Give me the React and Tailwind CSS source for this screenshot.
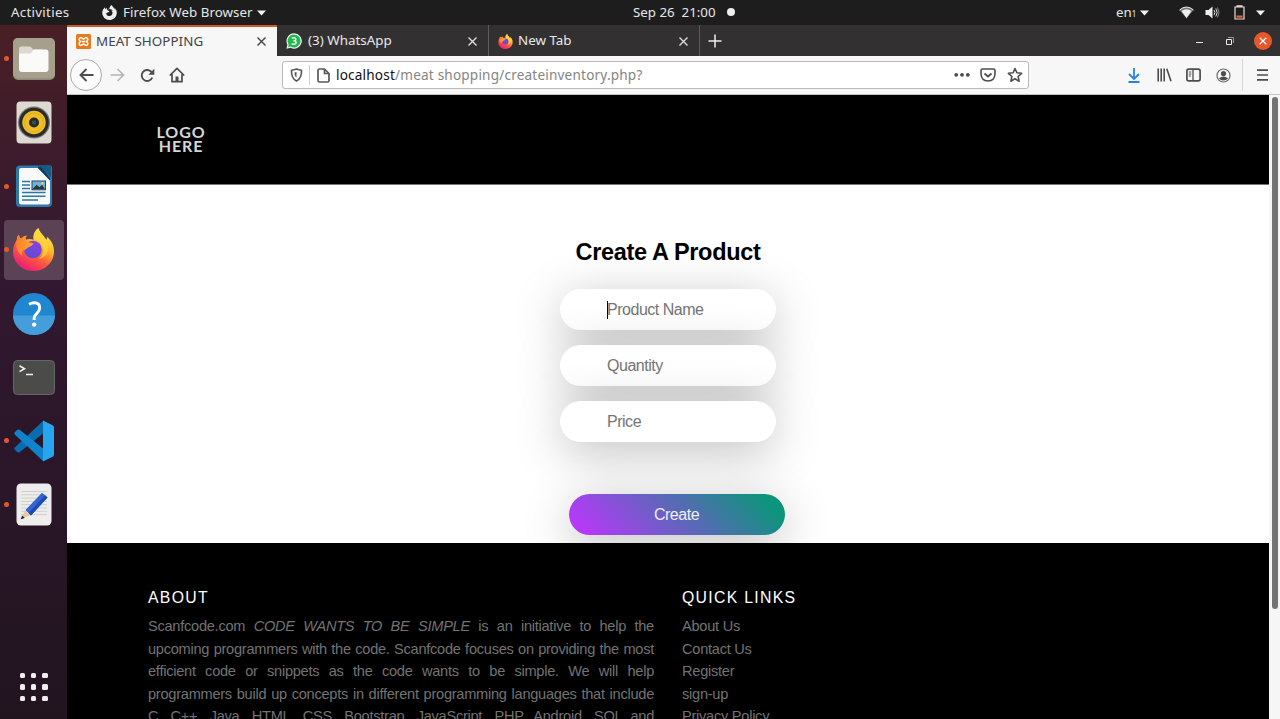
import React from "react";
import { SiFirefoxbrowser } from "react-icons/si";

const UI = "font-['Noto_Sans',sans-serif]";

function Caret() {
  return <svg width="9" height="6" viewBox="0 0 9 6"><path d="M0 0.5h9L4.5 5.5z" fill="#f2f2f2" /></svg>;
}

function FirefoxLogo({ size, id }) {
  return (
    <svg width={size} height={size} viewBox="0 0 44 44">
      <defs>
        <linearGradient id={id + "a"} x1="0.8" y1="0.05" x2="0.25" y2="1">
          <stop offset="0" stopColor="#fff14a" />
          <stop offset="0.35" stopColor="#ffb52b" />
          <stop offset="0.6" stopColor="#ff5f3a" />
          <stop offset="0.9" stopColor="#f0256d" />
        </linearGradient>
        <linearGradient id={id + "b"} x1="0.7" y1="0" x2="0.3" y2="1">
          <stop offset="0" stopColor="#8b3fe8" />
          <stop offset="1" stopColor="#5a4fd0" />
        </linearGradient>
        <linearGradient id={id + "c"} x1="0" y1="0" x2="1" y2="0.5">
          <stop offset="0" stopColor="#ff7a2a" />
          <stop offset="1" stopColor="#ffa62e" />
        </linearGradient>
      </defs>
      <path d="M27 0c1 4 4 6 6 9 1 1 1.500 2 2 3 1-1 1-2 1-3 4 4 7 8 7 15 0 11-9 20-21 20S1 35 1 24c0-5 2-9 4-12 0-2 .5-3.500 2-5 .5 2 1 3 2 4 2-2 4-3 6-3-1 1-1 3-1 4 3-1 5-1 8 0-1-4 1-9 5-12z" fill={"url(#" + id + "a)"} />
      <circle cx="21.500" cy="22" r="9" fill={"url(#" + id + "b)"} />
      <path d="M5 12c0-2 .5-3.500 2-5 .5 2 1 3 2 4 1.500-1.500 4-3 6-3-1 2-1.300 3.500-.5 5.500 2 1 5 1.500 7.500 2-1 2.500-3.500 3.300-5.500 4.500-2 1.200-2 2-4 2.500-2 .6-3 3-1.500 6C6 26 3 19 5 12z" fill={"url(#" + id + "c)"} />
      <path d="M27 0c-4 3-6 7-4 12 6 1 10 6 9 12-.5 3-2 6-5 8 9-2 12-10 8-18-3-5-7-8-8-14z" fill="#ffd83a" opacity="0.75" />
    </svg>
  );
}

function FilesIcon() {
  return (
    <svg width="42" height="42" viewBox="0 0 42 42">
      <rect x="0" y="0" width="42" height="42" rx="5" fill="#8f8877" />
      <rect x="0" y="0" width="42" height="40.500" rx="5" fill="#a69f8c" />
      <path d="M6 11q0-2.500 2.500-2.500h8q1.500 0 2.500 1.500l1 1.500h9v6H6z" fill="#dcd9d2" />
      <path d="M6 15.500h10.500q1.500 0 2.500-1.500l1-1.500q.7-1 2-1h11q2.500 0 2.500 2.500v17q0 3-3 3H9q-3 0-3-3z" fill="#fafaf8" />
    </svg>
  );
}

function MusicIcon() {
  return (
    <svg width="36" height="43" viewBox="0 0 36 43">
      <rect x="0.500" y="0.500" width="35" height="42" rx="4" fill="#dedad2" />
      <circle cx="18" cy="21.500" r="16" fill="#777" />
      <circle cx="18" cy="21.500" r="14.800" fill="#292b2b" />
      <circle cx="18" cy="21.500" r="11.700" fill="#f0bd27" />
      <circle cx="18" cy="21.500" r="9.500" fill="none" stroke="#e0af20" strokeWidth="1" />
      <circle cx="18" cy="21.500" r="5" fill="#262a2c" />
      <circle cx="18" cy="21.500" r="2.200" fill="#444a4c" />
    </svg>
  );
}

function WriterIcon() {
  return (
    <svg width="36" height="43" viewBox="0 0 36 43">
      <path d="M4 .5h20l11 0q1 1 1 3V38q0 4-4 4H4q-4 0-4-4V4.500q0-4 4-4z" fill="#2c7aa9" />
      <path d="M23 .5h12v12z" fill="#155b82" />
      <path d="M3 5q0-2 2-2h17l12 12.500V37q0 2.500-2.500 2.500h-26Q3 39.500 3 37z" fill="#f9f9f9" />
      <path d="M22 3l12 12.500V13L25 1.500h-3z" fill="#0f3f60" />
      <path d="M6 16.500h8M6 20h8M6 23.500h8M6 27.500h23.500M6 31.200h23.500M6 35h16" stroke="#2877a6" strokeWidth="1.500" />
      <rect x="16" y="16" width="13.500" height="8.800" fill="#6cb4dc" stroke="#174968" strokeWidth="1" />
      <path d="M16.500 24.300l4-4.500 3 2.500 2.500-2.500 3 4.500z" fill="#38322c" />
      <circle cx="26.500" cy="18.300" r="1.300" fill="#f5c244" />
    </svg>
  );
}

function HelpIcon() {
  return (
    <svg width="42" height="42" viewBox="0 0 42 42">
      <circle cx="21" cy="21" r="21" fill="#2186d0" />
      <path d="M0 22.500h42a21 19.500 0 0 1-42 0z" fill="#459edc" />
      <path d="M16 11.200q3-1.500 5.500-1.400 5.200.3 5.200 5 0 3-2.800 5.500-2.700 2.300-2.700 4.700v2" fill="none" stroke="#fff" strokeWidth="2.900" />
      <circle cx="21.200" cy="31.600" r="2.200" fill="#fff" />
    </svg>
  );
}

function TerminalIcon() {
  return (
    <svg width="42" height="35" viewBox="0 0 42 35">
      <rect x="0.500" y="0.500" width="41" height="34" rx="4" fill="#4b4c4a" stroke="#666765" />
      <path d="M6.500 5.800l5 2.900-5 2.900M13 14.500h7" fill="none" stroke="#f0f0f0" strokeWidth="1.600" />
    </svg>
  );
}

function CodeIcon() {
  return (
    <svg width="42" height="42" viewBox="0 0 42 42">
      <path d="M30 1L1.800 27.500q-1 1 0 2.300l2.500 2.400q1.200.8 2.300 0L32 12z" fill="#0a6cae" />
      <path d="M30 41L1.800 14.500q-1-1.200 0-2.300l2.500-2.400q1.200-.8 2.300 0L32 30z" fill="#0f83cb" />
      <path d="M30 .6l10 4.800q1 .6 1 2v27.200q0 1.400-1 2L30 41.400z" fill="#27a5ee" />
    </svg>
  );
}

function EditorIcon() {
  return (
    <svg width="36" height="43" viewBox="0 0 36 43">
      <rect x="0.500" y="0.500" width="35" height="42" rx="4.500" fill="#ededeb" />
      <path d="M5 8.500h26M5 11.800h26M5 15.100h26M5 18.400h26M5 21.700h26M5 25h26M5 28.300h26M5 31.600h26" stroke="#cccccc" strokeWidth="0.900" />
      <path d="M5 36l3.800-8.500 5 5z" fill="#eac79c" />
      <path d="M4.700 36.300l1.500-3.700 2.500 2.300z" fill="#222" />
      <path d="M9.500 27L26 9.800l5.500 4.700L15 32.500z" fill="#3464d4" />
      <path d="M12.500 30L29 12.300l2.500 2.200L15 32.500z" fill="#1e4bae" />
    </svg>
  );
}

const dockItems = [
  { Icon: FilesIcon, open: true },
  { Icon: MusicIcon },
  { Icon: WriterIcon, open: true },
  { Icon: () => <FirefoxLogo size={43} id="dock" />, open: true, active: true },
  { Icon: HelpIcon },
  { Icon: TerminalIcon },
  { Icon: CodeIcon, open: true },
  { Icon: EditorIcon, open: true },
];

function Dock() {
  return (
    <aside className="flex w-[67px] shrink-0 flex-col bg-linear-to-b from-[#491f25] via-[#321830] via-35% to-[#21141f] pt-[2px]">
      {dockItems.map(({ Icon, open, active }, i) => (
        <div key={i} className="flex h-[63.7px] shrink-0 items-center">
          <span className="flex w-[3.5px] shrink-0 items-center">
            {open && <i className="relative left-[3.5px] z-10 block size-[5px] shrink-0 rounded-full bg-[#e4572e]" />}
          </span>
          <div className={active ? "flex h-[60px] w-[60px] items-center justify-center rounded bg-[#5b4355]" : "flex h-[60px] w-[60px] items-center justify-center"}>
            <Icon />
          </div>
        </div>
      ))}
      <div className="mt-auto mb-[18px] ml-[19.5px] grid w-7 grid-cols-3 gap-[6px]">
        {Array.from({ length: 9 }, (_, i) => <i key={i} className="size-[5.5px] rounded-[1.5px] bg-[#f0edf0]" />)}
      </div>
    </aside>
  );
}

function TopBar() {
  return (
    <header className={`${UI} grid h-[25px] shrink-0 grid-cols-[574px_1fr_165px] items-center bg-[#1d1d1d] text-[13.3px] leading-none text-[#e6e6e6]`}>
      <div className="flex items-center pl-[11px]">
        <span className="w-[91px] tracking-[0.3px]">Activities</span>
        <SiFirefoxbrowser size={15} color="#eee" />
        <span className="ml-[6px] w-[134px] whitespace-nowrap tracking-[0.05px]">Firefox Web Browser</span>
        <Caret />
      </div>
      <div className="flex items-center pl-[59px]">
        <span className="w-[94px] whitespace-pre">Sep 26  21:00</span>
        <i className="size-2 rounded-full bg-[#eee]" />
      </div>
      <div className="flex items-center">
        <span className="ml-px w-[24px]">en<span className="text-[8px]">1</span></span>
        <Caret />
        <svg className="ml-[30px]" width="15" height="13" viewBox="0 0 15 13">
          <path d="M.5 4Q7.500-2 14.500 4L7.500 12.500z" fill="#777" />
          <path d="M.5 4Q7.500-2 14.500 4" fill="none" stroke="#eee" strokeWidth="1" />
          <path d="M2.500 5Q7.500 1.500 12.500 5L7.500 12z" fill="#eee" />
        </svg>
        <svg className="ml-[11px]" width="15" height="13" viewBox="0 0 15 13">
          <path d="M.5 4h3L7.500.5v12L3.500 9h-3z" fill="#eee" />
          <path d="M9 4q1.800 2.500 0 5M10.800 2.500q2.800 4 0 8" fill="none" stroke="#ddd" strokeWidth="1" />
          <path d="M12.500 1.500q3 5 0 10" fill="none" stroke="#888" />
        </svg>
        <svg className="ml-[14px]" width="11" height="15" viewBox="0 0 11 15">
          <path d="M3 2V.8h5V2M1 2h9v12H1z" fill="none" stroke="#e8dcd6" strokeWidth="1.200" />
          <path d="M2.500 10.500h6v2.200h-6z" fill="#e8643a" />
        </svg>
        <span className="ml-[11px]"><Caret /></span>
      </div>
    </header>
  );
}

function Close({ color }) {
  return <svg width="9" height="9" viewBox="0 0 9 9"><path d="M.5.5l8 8M8.500.5l-8 8" stroke={color} strokeWidth="1.400" /></svg>;
}

function TabStrip() {
  return (
    <div className={`${UI} flex h-[31px] shrink-0 bg-[#323031] text-[13.4px] leading-none text-[#e8e8e8]`}>
      <div className="flex h-full w-[210px] items-center border-t-2 border-[#d4562f] bg-[#f7f7f7] pr-[11px] pl-[9px] text-[#424242]">
        <svg width="15" height="15" viewBox="0 0 15 15">
          <rect width="15" height="15" rx="1.500" fill="#e77a1c" />
          <path d="M7.500 5.300Q5.500 3 3.600 4.200 2.500 5.500 4.300 7.500 2.500 9.500 3.600 10.800 5.500 12 7.500 9.700 9.500 12 11.400 10.800 12.500 9.500 10.700 7.500 12.500 5.500 11.400 4.200 9.500 3 7.500 5.300zM5.500 7.500h4" fill="none" stroke="#fff" strokeWidth="1.500" strokeLinejoin="round" />
        </svg>
        <span className="ml-[5px] grow tracking-[0.05px]">MEAT SHOPPING</span>
        <Close color="#444" />
      </div>
      <div className="flex w-[212px] items-center border-r border-[#5d5b5c] pt-px pr-[11px] pl-[9px]">
        <svg width="16" height="16" viewBox="0 0 16 16">
          <path d="M8 .3a7.700 7.700 0 1 1-3.500 14.500L.4 15.700l1-4A7.700 7.700 0 0 1 8 .3z" fill="#f5f5f5" />
          <path d="M8 1.500a6.500 6.500 0 1 1-3.300 12.100L2 14.200l.7-2.600A6.500 6.500 0 0 1 8 1.500z" fill="#1fb94c" />
          <path d="M5.800 5.200Q9.800 4 9.800 6.200q0 1.500-2.300 1.600 2.600.1 2.600 1.900 0 2.300-4.500 1.300" fill="none" stroke="#fff" strokeWidth="1.400" />
        </svg>
        <span className="ml-[6px] grow">(3) WhatsApp</span>
        <Close color="#ddd" />
      </div>
      <div className="flex w-[211px] items-center border-r border-[#5d5b5c] pt-px pr-[11px] pl-[9px]">
        <FirefoxLogo size={15} id="tab" />
        <span className="ml-[5px] grow">New Tab</span>
        <Close color="#ddd" />
      </div>
      <svg className="ml-2 self-center" width="14" height="14" viewBox="0 0 14 14"><path d="M7 .5v13M.5 7h13" stroke="#eee" strokeWidth="1.500" /></svg>
      <div className="ml-auto flex items-center pr-2">
        <i className="mt-[3px] mr-[23px] h-px w-[7px] bg-[#eee]" />
        <svg className="mr-5" width="8" height="8" viewBox="0 0 8 8"><path d="M.5 2.500h5v5h-5z" fill="none" stroke="#eee" /><path d="M2 .5h5.500V6" fill="none" stroke="#999" /></svg>
        <span className="flex size-[18px] items-center justify-center rounded-full bg-[#e9562a]">
          <svg width="8" height="8" viewBox="0 0 8 8"><path d="M.7.700l6.600 6.600M7.300.7L.7 7.300" stroke="#fff" strokeWidth="1.300" /></svg>
        </span>
      </div>
    </div>
  );
}

const ink = "#4d4d4f";

function Toolbar() {
  return (
    <div className="flex h-[39px] shrink-0 items-center border-b border-[#c4c4c4] bg-[#f7f7f7]">
      <span className="ml-[3px] flex size-8 items-center justify-center rounded-full border border-[#aaa] bg-[#fcfcfc]">
        <svg width="15" height="14" viewBox="0 0 15 14"><path d="M14.500 7H1.500M7.500 1l-6 6 6 6" fill="none" stroke={ink} strokeWidth="1.900" /></svg>
      </span>
      <svg className="ml-[8px]" width="15" height="14" viewBox="0 0 15 14"><path d="M.5 7h13M7.500 1l6 6-6 6" fill="none" stroke="#b5b5b5" strokeWidth="1.600" /></svg>
      <svg className="ml-[15px]" width="15" height="15" viewBox="0 0 15 15"><path d="M12.300 9.500A5.500 5.500 0 1 1 11 3.500l2 2" fill="none" stroke={ink} strokeWidth="1.900" /><path d="M14.300.8v6H8.300z" fill={ink} /></svg>
      <svg className="ml-[14px]" width="16" height="16" viewBox="0 0 16 16"><path d="M.8 8.500L8 1.300l7.200 7.200M3 7v7.700h10V7" fill="none" stroke={ink} strokeWidth="1.700" strokeLinejoin="round" /><path d="M6.500 14.500v-5h3v5z" fill={ink} /></svg>
      <div className={`${UI} ml-[97px] flex h-[28px] w-[747px] shrink-0 items-center rounded-[3px] border border-[#bababa] bg-white text-[13.6px] text-[#858585]`}>
        <svg className="ml-[7px]" width="13" height="14" viewBox="0 0 13 14"><path d="M6.500 1q2.500 1 5 1.200c.2 5-.5 8.500-5 10.800C2 10.700 1.300 7.200 1.500 2.200Q4 2 6.500 1z" fill="none" stroke="#58585a" strokeWidth="1.600" /><path d="M6.500 4v5.500q-2-1-2-5z" fill="#58585a" /></svg>
        <i className="ml-[6px] h-5 w-px bg-[#cfcfcf]" />
        <svg className="ml-[7px]" width="13" height="15" viewBox="0 0 13 15"><path d="M2.500 1h5L12 5.500v7Q12 14 10.500 14h-8Q1 14 1 12.500v-10Q1 1 2.500 1zM7.500 1v4.500H12" fill="none" stroke="#58585a" strokeWidth="1.700" /></svg>
        <span className="ml-[6px] grow pt-px tracking-[0.18px]"><span className="text-[#111]">localhost</span>/meat shopping/createinventory.php?</span>
        <svg width="16" height="4" viewBox="0 0 16 4"><path d="M2.200 0a1.900 1.900 0 1 0 .01 0M8 0a1.900 1.900 0 1 0 .01 0M13.800 0a1.900 1.900 0 1 0 .01 0" fill={ink} /></svg>
        <svg className="ml-[10px]" width="16" height="14" viewBox="0 0 16 14"><path d="M2.500 1h11Q15 1 15 2.500V6Q14.500 13 8 13T1 6V2.500Q1 1 2.500 1z" fill="none" stroke={ink} strokeWidth="1.600" /><path d="M4.500 5.500L8 8.500l3.500-3" fill="none" stroke={ink} strokeWidth="1.800" /></svg>
        <svg className="mr-[5px] ml-[11px]" width="16" height="16" viewBox="0 0 16 16"><path d="M8 1.500l1.900 4.300 4.700.5-3.500 3.200 1 4.700L8 11.800l-4.100 2.400 1-4.700L1.400 6.300l4.700-.5z" fill="none" stroke={ink} strokeWidth="1.600" strokeLinejoin="round" /></svg>
      </div>
      <svg className="ml-[99px]" width="12" height="15" viewBox="0 0 12 15"><path d="M6 0v10.500M1 6l5 5 5-5M.5 14h11" fill="none" stroke="#2484e4" strokeWidth="1.800" /></svg>
      <svg className="ml-[17px]" width="15" height="14" viewBox="0 0 15 14"><path d="M1.200.5v13M4.200.5v13M7.200.5v13M9.800.8l4.200 12.400" fill="none" stroke={ink} strokeWidth="1.600" /></svg>
      <svg className="ml-[14px]" width="15" height="14" viewBox="0 0 15 14"><rect x="0.900" y="1.200" width="13.200" height="11.600" rx="1.800" fill="none" stroke={ink} strokeWidth="1.700" /><path d="M7 1v12" stroke={ink} strokeWidth="1.300" /><path d="M2.800 4h2.500M2.800 6h2.500M2.800 8h2" stroke={ink} /></svg>
      <svg className="ml-[15px]" width="15" height="15" viewBox="0 0 15 15"><circle cx="7.500" cy="7.500" r="6.500" fill="none" stroke="#6a6a6c" strokeWidth="1.200" /><circle cx="7.500" cy="5.600" r="2.600" fill={ink} /><path d="M3 10.300q4.500-3.400 9 0-1.600 2.300-4.500 2.300T3 10.300z" fill={ink} /></svg>
      <i className="ml-[11px] h-8 w-px bg-[#d5d5d5]" />
      <svg className="ml-[14px]" width="11" height="12" viewBox="0 0 11 12"><path d="M0 1.200h11M0 6h11M0 10.800h11" stroke={ink} strokeWidth="1.700" /></svg>
    </div>
  );
}

const links = ["About Us", "Contact Us", "Register", "sign-up", "Privacy Policy"];

function Field({ label, focused }) {
  return (
    <div className="flex h-[41px] w-[216px] items-center rounded-[21px] bg-white pl-[47px] text-[16px] tracking-[-0.48px] text-[#757575] shadow-[0_10px_48px_rgba(0,0,0,0.26)]">
      {focused && <i className="-mr-px h-[18px] w-px bg-black" />}
      <span>{label}</span>
    </div>
  );
}

function Page() {
  return (
    <div className="flex min-h-0 grow font-['Liberation_Sans',sans-serif]">
      <div className="flex w-[1202px] shrink-0 flex-col">
        <header className="flex h-[90px] shrink-0 items-center border-b border-[#7a7478] bg-black pb-[2px] pl-[84px]">
          <p className="w-[60px] text-center font-['Lato',sans-serif] text-[16px] leading-[14px] font-bold tracking-[0.9px] text-[#d6d6d6]">LOGO HERE</p>
        </header>
        <main className="flex h-[358px] shrink-0 flex-col items-center overflow-hidden bg-white">
          <h1 className="mt-[53px] text-[23.5px] leading-[28px] font-bold tracking-[-0.34px] text-black">Create A Product</h1>
          <form className="mt-[23px] flex flex-col gap-[15px]">
            <Field label="Product Name" focused />
            <Field label="Quantity" />
            <Field label="Price" />
          </form>
          <button className="mt-[52px] ml-[17px] h-[41px] w-[216px] shrink-0 rounded-[21px] bg-[linear-gradient(45deg,#b43af7_8%,#5a68b8_52%,#0d947c_90%)] text-[16px] tracking-[-0.48px] text-[#f0f0f8] shadow-[0_10px_48px_rgba(0,0,0,0.26)]">Create</button>
        </main>
        <footer className="flex min-h-0 grow overflow-hidden bg-black pt-[45px] pl-[81px] text-[14.6px] leading-[22.5px] tracking-[-0.26px] text-[#737373]">
          <section className="w-[506px]">
            <h2 className="mb-[7px] text-[15.8px] leading-[20px] tracking-[1.3px] text-white">ABOUT</h2>
            <p className="text-justify">
              Scanfcode.com <em>CODE WANTS TO BE SIMPLE</em> is an initiative to help the upcoming programmers with the code. Scanfcode focuses on providing the most efficient code or snippets as the code wants to be simple. We will help programmers build up concepts in different programming languages that include C, C++, Java, HTML, CSS, Bootstrap, JavaScript, PHP, Android, SQL and Algorithm.
            </p>
          </section>
          <section className="ml-[28px]">
            <h2 className="mb-[7px] text-[15.8px] leading-[20px] tracking-[1.3px] text-white">QUICK LINKS</h2>
            <ul>{links.map((l) => <li key={l}>{l}</li>)}</ul>
          </section>
        </footer>
      </div>
      <div className="flex grow justify-center bg-[#f6f6f6] pt-[2px]">
        <i className="h-[512px] w-[6px] rounded-full bg-[#737373]" />
      </div>
    </div>
  );
}

export default function App() {
  return (
    <div className="flex h-[719px] w-[1280px] flex-col overflow-hidden bg-[#1d1d1d]">
      <TopBar />
      <div className="flex min-h-0 grow">
        <Dock />
        <div className="flex min-w-0 grow flex-col">
          <TabStrip />
          <Toolbar />
          <Page />
        </div>
      </div>
    </div>
  );
}
